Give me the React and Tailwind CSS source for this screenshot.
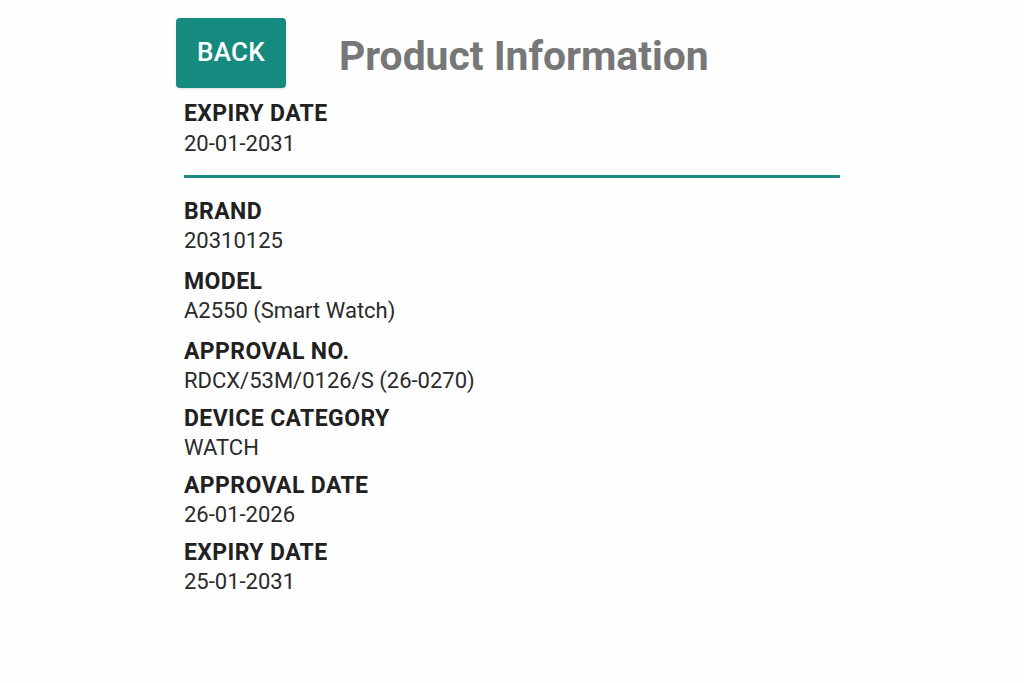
import React from "react";

const rows = [
  ["BRAND", "20310125"],
  ["MODEL", "A2550 (Smart Watch)"],
  ["APPROVAL NO.", "RDCX/53M/0126/S (26-0270)"],
  ["DEVICE CATEGORY", "WATCH"],
  ["APPROVAL DATE", "26-01-2026"],
  ["EXPIRY DATE", "25-01-2031"],
];

export default function App() {
  return (
    <div className="min-h-[683px] w-full bg-[#fefefe]" style={{ fontFamily: "Roboto, 'Noto Sans', sans-serif" }}>
      <div className="mx-auto w-[672px] pt-[18px]">
        <div className="flex items-center">
          <button className="flex h-[70px] w-[110px] items-center justify-center rounded-[4px] bg-[#158b7f] pb-[2px] text-[26px] font-medium tracking-[0.3px] text-white shadow-sm">
            BACK
          </button>
          <h1 className="ml-[53px] pt-[6px] text-[40.8px] font-bold leading-none text-[#777777]">Product Information</h1>
        </div>
        <div className="px-2">
          <div className="mt-[12px] text-[23px] font-bold leading-[28px] tracking-[0.4px] text-[#212121]">EXPIRY DATE</div>
          <div className="mt-[2px] text-[22px] leading-[28px] text-[#2a2a2a]">20-01-2031</div>
          <div className="mt-[17px] h-[3px] bg-[#1a8a80]" />
          <div className="mt-[20px] flex flex-col">
            {rows.map(([k, v], i) => (
              <div key={i} className={i < 2 ? "pb-[13px]" : "pb-[10px]"}>
                <div className="text-[23px] font-bold leading-[28px] tracking-[0.4px] text-[#212121]">{k}</div>
                <div className="mt-[1px] text-[22px] leading-[28px] text-[#2a2a2a]">{v}</div>
              </div>
            ))}
          </div>
        </div>
      </div>
    </div>
  );
}
